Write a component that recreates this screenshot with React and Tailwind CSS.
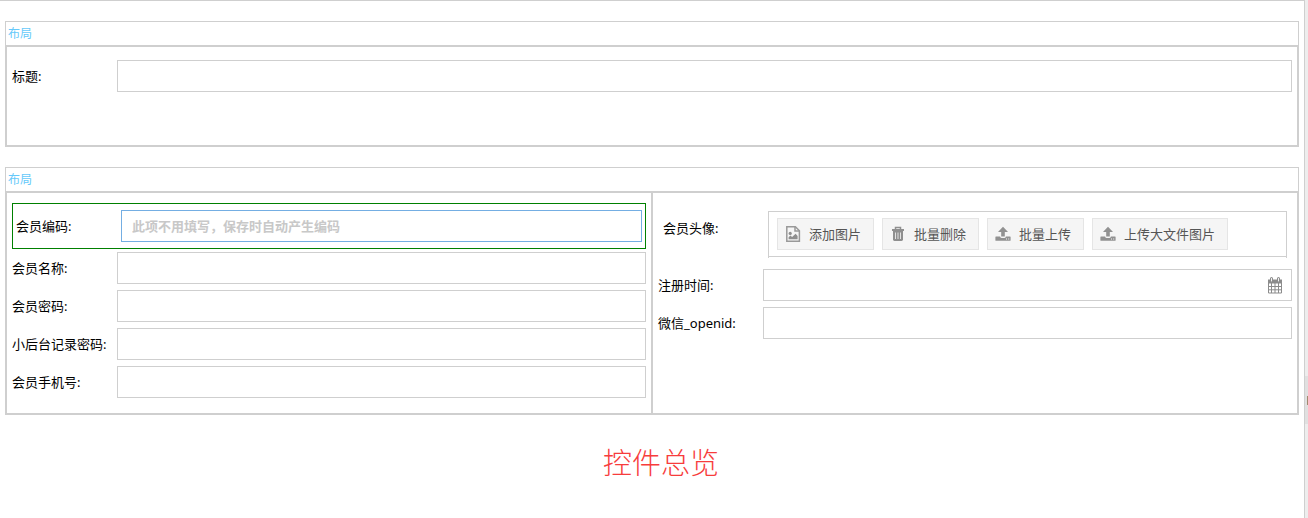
import React from "react";

const memberFields = [
  { id: "name", label: "会员名称:", type: "text" },
  { id: "password", label: "会员密码:", type: "password" },
  { id: "adminPassword", label: "小后台记录密码:", type: "password" },
  { id: "phone", label: "会员手机号:", type: "tel" },
];

function ImageFileIcon() {
  return (
    <svg viewBox="0 0 16 16" className="w-4 h-4" fill="none" stroke="#999" strokeWidth="1.5">
      <path d="M1.8.8h8.6l4 4v10.4H1.8z" />
      <path d="M10 .9v4.2h4.3" />
      <circle cx="5.2" cy="7.4" r="1.6" fill="#8f8f8f" stroke="none" />
      <path d="M3.6 13.2v-2l1.8-1.6 1.7 1.5 3.5-3.3 2 2.2v3.2z" fill="#8f8f8f" stroke="none" />
    </svg>
  );
}

function TrashIcon() {
  return (
    <svg viewBox="0 0 16 16" className="w-4 h-4" fill="none" stroke="#8f8f8f">
      <path d="M5.5 3V1.5h5V3" strokeWidth="1.5" />
      <path d="M2 4h12" strokeWidth="2" />
      <path d="M3 5h10v8.6q0 1.4-1.4 1.4H4.4Q3 15 3 13.6z" fill="#8f8f8f" stroke="none" />
      <path d="M5.5 6.5V13M8 6.5V13M10.5 6.5V13" stroke="#e2e2e2" />
    </svg>
  );
}

function UploadIcon() {
  return (
    <svg viewBox="0 0 16 16" className="w-4 h-4" fill="#919191">
      <path d="M8 .8 13 6H9.8v4.6H6.2V6H3z" />
      <path
        fillRule="evenodd"
        d="M.9 10.5h4.2q.4 1.6 1.6 1.6h2.6q1.2 0 1.6-1.6h4.2q.5 0 .5.5v3.2q0 .6-.6.6H1q-.6 0-.6-.6V11q0-.5.5-.5zM11 12.6v1h1v-1zm2.2 0v1h1v-1z"
      />
    </svg>
  );
}

function CalendarIcon() {
  return (
    <svg viewBox="0 0 16 17" className="w-4 h-[17px]" fill="none" stroke="#8c8c8c">
      <path d="M1 2.5h14v4H1z" fill="#8c8c8c" stroke="none" />
      <path d="M1.5 6v10h13V6M4.5 6v10M8 6v10M11.5 6v10M1.5 9.5h13M1.5 12.8h13" />
      <path d="M4.5 1.5v2.5M11.5 1.5v2.5" strokeWidth="3" strokeLinecap="round" />
      <path d="M4.5 1.5v2.5M11.5 1.5v2.5" stroke="#f4f4f4" strokeLinecap="round" />
    </svg>
  );
}

const actions = [
  { label: "添加图片", icon: ImageFileIcon },
  { label: "批量删除", icon: TrashIcon },
  { label: "批量上传", icon: UploadIcon },
  { label: "上传大文件图片", icon: UploadIcon },
];

function Panel({ children, className }) {
  return (
    <section>
      <h2 className="h-6 pl-0.5 border border-b-0 border-[#cfcfcf] text-xs leading-6 text-[#66c9fa]">布局</h2>
      <div className={`border-2 border-[#cfcfcf] ${className}`}>{children}</div>
    </section>
  );
}

function Field({ id, label, type = "text", children }) {
  return (
    <div className="flex items-center px-[5px] py-[3px]">
      <label htmlFor={id} className="w-[105px] shrink-0">{label}</label>
      <div className="relative flex-1">
        <input id={id} type={type} className="block w-full h-8 px-2.5 border border-[#cfcfcf] bg-white outline-none" />
        {children}
      </div>
    </div>
  );
}

export default function App() {
  return (
    <div className="flex min-h-screen bg-[#ededed] text-[13px] leading-[22px] text-black font-['Noto_Sans','Noto_Sans_CJK_SC',sans-serif]">
      <main className="flex-1 min-w-0 px-[5px] pt-5 bg-white border-t border-r border-[#cfcfcf]">
        <div className="flex flex-col gap-5">
          <Panel className="pt-2.5 pb-[50px]">
            <Field id="title" label="标题:" />
          </Panel>

          <Panel className="flex">
            {/* Left column */}
            <div className="flex-1 min-w-0 pt-2.5 pb-3">
              <div className="flex items-center mx-[5px] px-[3px] py-1.5 border border-[#008000]">
                <label htmlFor="code" className="w-[105px] shrink-0">会员编码:</label>
                <input
                  id="code"
                  type="text"
                  placeholder="此项不用填写，保存时自动产生编码"
                  className="flex-1 min-w-0 h-8 px-2.5 border border-[#74aee3] outline-none placeholder:text-[#c8c8c8] placeholder:font-bold"
                />
              </div>
              {memberFields.map((field) => (
                <Field key={field.id} {...field} />
              ))}
            </div>

            {/* Right column */}
            <div className="flex-1 min-w-0 pt-2.5 border-l-2 border-[#cfcfcf]">
              <div className="flex items-start px-2.5 py-2">
                <span className="w-[105px] shrink-0 leading-[34px]">会员头像:</span>
                <div className="flex-1 min-w-0 pb-px border-x border-[#cfcfcf]">
                  <div className="flex flex-wrap gap-2 px-2 py-1.5 border-y border-[#cfcfcf]">
                    {actions.map(({ label, icon: Icon }) => (
                      <button
                        key={label}
                        type="button"
                        className="flex items-center gap-2 h-8 pl-[7px] pr-3 bg-[#f5f5f5] border border-[#e5e5e5] text-[#555]"
                      >
                        <Icon />
                        {label}
                      </button>
                    ))}
                  </div>
                </div>
              </div>
              <Field id="registered" label="注册时间:">
                <button type="button" aria-label="选择时间" className="absolute right-[9px] top-2">
                  <CalendarIcon />
                </button>
              </Field>
              <Field id="openid" label="微信_openid:" />
            </div>
          </Panel>
        </div>

        <h1 className="mt-7 pl-[18px] text-center text-[29px] leading-10 font-light text-[#f73c3c]">控件总览</h1>
      </main>

      {/* Collapsed side bar with its drag handle */}
      <aside className="flex flex-col w-[3px] pt-[376px]">
        <div className="flex items-center justify-end h-12 bg-[#e0e0e0]">
          <span className="w-px h-[9px] bg-[#a08a70]" />
        </div>
      </aside>
    </div>
  );
}
